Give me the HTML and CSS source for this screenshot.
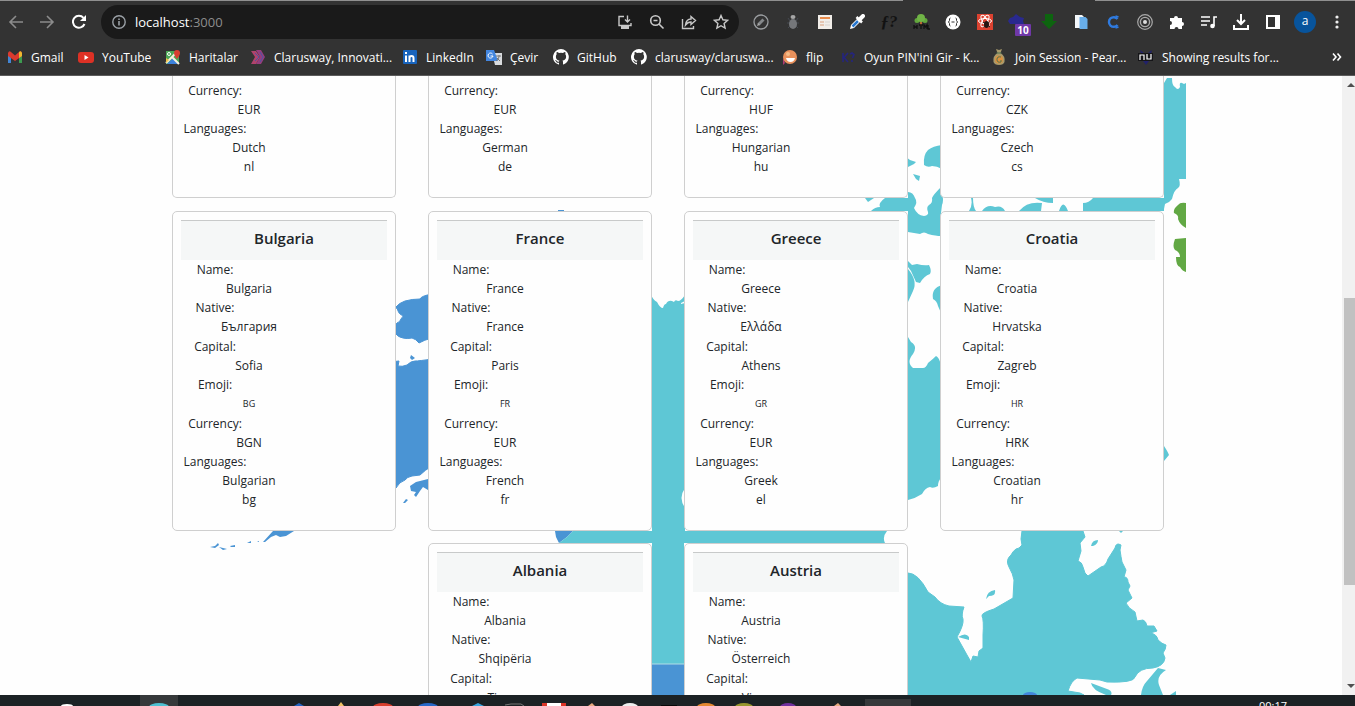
FILE: index.html
```html
<!DOCTYPE html>
<html lang="en">
<head>
<meta charset="utf-8">
<title>Countries</title>
<link rel="stylesheet" href="styles.css">
</head>
<body>
<header class="chrome">
  <div class="tab-edge"><span class="tab-active"></span></div>
  <nav class="toolbar">
    <button class="tool dim" aria-label="Back"><svg width="16" height="16" viewBox="0 0 16 16"><path d="M15 8H2M8 2L2 8l6 6" class="line"/></svg></button>
    <button class="tool dim" aria-label="Forward"><svg width="16" height="16" viewBox="0 0 16 16"><path d="M0 8h13M7 2l6 6-6 6" class="line"/></svg></button>
    <button class="tool" aria-label="Reload"><svg width="16" height="16" viewBox="0 0 16 16"><path d="M12.500 10a6 6 0 1 1-1-6.200" class="line thick"/><path d="M14 1v6H8z" fill="currentColor"/></svg></button>
    <div class="address">
      <svg width="14" height="14" viewBox="0 0 14 14"><circle cx="7" cy="7" r="6.200" fill="none" stroke="#9aa0a6" stroke-width="1.400"/><path d="M7 6v4.500M7 3.500V5" stroke="#9aa0a6" stroke-width="1.600"/></svg>
      <span class="url">localhost<span class="port">:3000</span></span>
      <button class="tool soft" aria-label="Install"><svg width="16" height="16" viewBox="0 0 16 16"><path d="M7 2.500H2v9h12V9M10.500 1.500v6M8 5.500l2.500 2.500L13 5.500" class="line fine"/><path d="M4 12h8v3H4z" fill="currentColor"/></svg></button>
      <button class="tool soft" aria-label="Zoom"><svg width="16" height="16" viewBox="0 0 16 16"><circle cx="6.500" cy="6.500" r="4.800" class="line"/><path d="M10 10l4.500 4.500M4.500 6.500h4" class="line"/></svg></button>
      <button class="tool soft" aria-label="Share"><svg width="16" height="16" viewBox="0 0 16 16"><path d="M1.500 5v9.500h11V12" class="line fine"/><path d="M4.500 11c.5-4 2-6 5.500-6V2.500L14.500 6.500 10 10.500V8C7.500 8 6 9 4.500 11z" class="line fine"/></svg></button>
      <button class="tool soft" aria-label="Bookmark"><svg width="16" height="16" viewBox="0 0 16 16"><path d="M8 1.500l1.900 4.300 4.700.5-3.500 3.100 1 4.700L8 11.700l-4.100 2.400 1-4.700L1.400 6.300l4.700-.5z" class="line fine"/></svg></button>
    </div>
    <button class="tool" aria-label="Compass"><svg width="16" height="16" viewBox="0 0 16 16"><circle cx="8" cy="8" r="7" fill="none" stroke="#9a9da0" stroke-width="1.300"/><path d="M5.500 10.500l5-5" stroke="#85888b" stroke-width="3"/><path d="M4 12l1-3 2 2z" fill="#aaa"/></svg></button>
    <button class="tool" aria-label="Bug"><svg width="16" height="16" viewBox="0 0 16 16"><path d="M3 4l2 3M13 4l-2 3M2 9h12M3 14l3-3M13 14l-3-3" stroke="#444850" /><ellipse cx="8" cy="10" rx="4" ry="5" fill="#75777a"/><ellipse cx="8" cy="3" rx="2.500" ry="2" fill="#a6a6a6"/></svg></button>
    <button class="tool" aria-label="Notes"><svg width="16" height="16" viewBox="0 0 16 16"><path d="M1 1h14v14H1z" fill="#f2eee9"/><path d="M3 3h10v2H3z" fill="#e88b4b"/><path d="M3 8h4M3 11h4" stroke="#dba07c"/><path d="M8 8h5M8 11h5" stroke="#d8d4d0"/></svg></button>
    <button class="tool" aria-label="Colour picker"><svg width="16" height="16" viewBox="0 0 16 16"><path d="M1 15l1-4 7-7 3 3-7 7z" fill="#fff"/><path d="M3.500 12.500L9 7" stroke="#2878d0" stroke-width="2.500"/><path d="M7.500 3l5.500 5.500" stroke="#fff" stroke-width="2.500"/><path d="M10.500 5.500L14 2" stroke="#fff" stroke-width="4" stroke-linecap="round"/></svg></button>
    <button class="tool script-tool" aria-label="Font finder">ƒ?</button>
    <button class="tool" aria-label="HTML tree"><svg width="18" height="16" viewBox="0 0 18 16"><path d="M8 7h2v5H8z" fill="#b56a32"/><circle cx="5" cy="6.500" r="2.500" fill="#61a63c"/><circle cx="13" cy="6.500" r="2.500" fill="#61a63c"/><circle cx="9" cy="4" r="4" fill="#70b446"/><path d="M2 11v4M5 11v4M2 13h3M7 11h4M9 11v4M12 15v-4l1.500 2L15 11v4M16 11v4h2" fill="none" stroke="#111" stroke-width="1.300"/></svg></button>
    <button class="tool" aria-label="JSON"><svg width="16" height="16" viewBox="0 0 16 16"><circle cx="8" cy="8" r="7.500" fill="#fff"/><path d="M5.500 4Q4 4 4.500 6.500L3.500 8l1 1.500Q4 12 5.500 12M10.500 4q1.500 0 1 2.500l1 1.500-1 1.500q.5 2.500-1 2.500M6.500 8h3" fill="none" stroke="#333"/></svg></button>
    <button class="tool" aria-label="React tools"><svg width="16" height="16" viewBox="0 0 16 16"><path d="M0 0h16v16H0z" fill="#dc4230"/><g fill="none" stroke="#fff"><ellipse cx="8" cy="7" rx="6.500" ry="2.500"/><ellipse cx="8" cy="7" rx="6.500" ry="2.500" transform="rotate(60 8 7)"/><ellipse cx="8" cy="7" rx="6.500" ry="2.500" transform="rotate(-60 8 7)"/></g><ellipse cx="9.500" cy="10.500" rx="2.500" ry="3.500" fill="#25140f"/><path d="M6 8l7 5M12.500 8l-6 5" stroke="#25140f"/></svg></button>
    <button class="tool" aria-label="Downloads counter"><svg width="28" height="22" viewBox="0 0 28 22"><path d="M13 3l4 3 4 1-1 3 1 3H7L5 10l2-3 3-1z" fill="#29298f"/></svg><span class="badge">10</span></button>
    <button class="tool" aria-label="Green arrow"><svg width="16" height="16" viewBox="0 0 16 16"><path d="M4 0h8v7h4l-8 8-8-8h4z" fill="#0d640f"/></svg></button>
    <button class="tool" aria-label="Copy"><svg width="16" height="16" viewBox="0 0 16 16"><path d="M2 1h7l2 2v11H2z" fill="#f4f7fa"/><path d="M6.500 3h6l2 2v10h-8z" fill="#68aeea"/></svg></button>
    <button class="tool" aria-label="C extension"><svg width="16" height="16" viewBox="0 0 16 16"><path d="M12.500 5a4.800 4.800 0 1 0 0 6" fill="none" stroke="#2f7be0" stroke-width="2.400"/><path d="M10.500 2l3 1M10.500 14l3-1" stroke="#2f7be0" stroke-width="1.600"/></svg></button>
    <button class="tool" aria-label="Target"><svg width="16" height="16" viewBox="0 0 16 16"><circle cx="8" cy="8" r="7.300" fill="none" stroke="#aaa" stroke-width="1.200"/><circle cx="8" cy="8" r="4.600" fill="none" stroke="#aaa" stroke-width="1.400"/><circle cx="8" cy="8" r="2" fill="#ddd"/></svg></button>
    <button class="tool" aria-label="Extensions"><svg width="16" height="16" viewBox="0 0 16 16"><path d="M1 4h4a2 2 0 1 1 4 0h4v4a2 2 0 1 1 0 4v3H9.500a2 2 0 1 0-4 0H1v-4a2 2 0 1 0 0-4z" fill="#fff"/></svg></button>
    <button class="tool" aria-label="Media"><svg width="16" height="16" viewBox="0 0 16 16"><path d="M0 3h9M0 7h9M0 11h6M13 12V3h3" stroke="#fff" stroke-width="1.600" fill="none"/><circle cx="11.500" cy="12" r="2.300" fill="#fff"/></svg></button>
    <button class="tool" aria-label="Downloads"><svg width="16" height="16" viewBox="0 0 16 16"><path d="M8 0v9M4 6l4 4 4-4M1 11v4h14v-4" stroke="#fff" stroke-width="2" fill="none"/></svg></button>
    <button class="tool" aria-label="Side panel"><svg width="16" height="16" viewBox="0 0 16 16"><path d="M2 2h12v12H2z" stroke="#fff" stroke-width="2" fill="none"/><path d="M10 2h4v12h-4z" fill="#fff"/></svg></button>
    <button class="tool" aria-label="Profile"><span class="avatar">a</span></button>
    <button class="tool" aria-label="Menu"><svg width="4" height="16" viewBox="0 0 4 16"><g fill="#eee"><circle cx="2" cy="3" r="1.600"/><circle cx="2" cy="8" r="1.600"/><circle cx="2" cy="13" r="1.600"/></g></svg></button>
  </nav>
  <nav class="bookmarks">
    <a href="#"><svg viewBox="0 0 16 16"><path d="M1 4v10h3V4z" fill="#4285d4"/><path d="M12 4v10h3V4z" fill="#3d9b50"/><path d="M1 4q1-3 3-1l4 3.500L12 3q2-2 3 1v3l-7 5-7-5z" fill="#dc3a2e"/><path d="M12 3q2-2 3 1v3l-3 2z" fill="#efb92f"/></svg>Gmail</a>
    <a href="#"><svg viewBox="0 0 16 16"><rect y="3" width="16" height="11" rx="3" fill="#dd3125"/><path d="M6.500 6v5l4-2.500z" fill="#fff"/></svg>YouTube</a>
    <a href="#"><svg viewBox="0 0 16 16"><path d="M1 2h13v13H1z" fill="#4ca656"/><path d="M2 15l6-6 6 6z" fill="#3c82dc"/><path d="M1 14L12 3M7.500 8.500L14 15" stroke="#f5efe0" stroke-width="2"/><path d="M1 14V9l3 2z" fill="#eec24a"/><path d="M9 4a3 3 0 0 1 6 0q0 2-3 6Q9 6 9 4z" fill="#d83e31"/><circle cx="4" cy="5" r="1.500" fill="none" stroke="#fff"/></svg>Haritalar</a>
    <a href="#"><svg viewBox="0 0 16 16"><path d="M1 2h5l4 6-4 7H1l4-7z" fill="#af436d"/><path d="M6 1h5l4 7-4 7H6l4-7z" fill="#963d7d"/><path d="M5 4l4 4-4 4M10 3l3 5-3 5" stroke="#4a55a3" fill="none"/></svg>Clarusway, Innovati...</a>
    <a href="#"><svg viewBox="0 0 16 16"><rect x="1" y="1" width="14" height="14" rx="1" fill="#1864bd"/><path d="M4 6.500V13M4 3v2M7.500 6.500V13M7.500 9q0-2 2-2t2 2v4" stroke="#fff" stroke-width="2" fill="none"/></svg>LinkedIn</a>
    <a href="#"><svg viewBox="0 0 16 16"><path d="M6 4h10v12H9z" fill="#d9dbde"/><path d="M0 1h8l4 11H0z" fill="#4386df"/><path d="M6.500 5A2.500 2.500 0 1 0 7 7H4.500" stroke="#fff" fill="none"/><path d="M10 7h5M13 6v2q-1 3-3 4M11 9l3 3" stroke="#777" fill="none"/></svg>Çevir</a>
    <a href="#"><svg viewBox="0 0 16 16"><path d="M8 0a8 8 0 0 0-2.500 15.600c.4.100.5-.2.500-.4v-1.500c-2.200.5-2.700-1-2.700-1-.4-.9-.9-1.200-.9-1.200-.7-.5.1-.5.1-.5.800.1 1.200.8 1.200.8.700 1.300 1.900.9 2.300.7.100-.5.300-.9.500-1.100-1.800-.2-3.600-.9-3.600-4 0-.9.300-1.600.8-2.200-.1-.2-.4-1 .1-2.100 0 0 .7-.2 2.200.8a7.600 7.600 0 0 1 4 0c1.500-1 2.200-.8 2.200-.8.500 1.100.2 1.900.1 2.100.5.600.8 1.300.8 2.200 0 3.100-1.900 3.800-3.700 4 .3.200.6.700.6 1.500v2.200c0 .2.100.5.600.4A8 8 0 0 0 8 0z" fill="#fff"/></svg>GitHub</a>
    <a href="#"><svg viewBox="0 0 16 16"><path d="M8 0a8 8 0 0 0-2.500 15.600c.4.100.5-.2.500-.4v-1.500c-2.200.5-2.700-1-2.700-1-.4-.9-.9-1.200-.9-1.200-.7-.5.1-.5.1-.5.800.1 1.200.8 1.200.8.700 1.300 1.900.9 2.300.7.100-.5.300-.9.500-1.100-1.800-.2-3.600-.9-3.600-4 0-.9.300-1.600.8-2.200-.1-.2-.4-1 .1-2.100 0 0 .7-.2 2.200.8a7.600 7.600 0 0 1 4 0c1.500-1 2.200-.8 2.200-.8.500 1.100.2 1.900.1 2.100.5.600.8 1.300.8 2.200 0 3.100-1.900 3.800-3.700 4 .3.200.6.700.6 1.500v2.200c0 .2.100.5.600.4A8 8 0 0 0 8 0z" fill="#fff"/></svg>clarusway/claruswa...</a>
    <a href="#"><svg viewBox="0 0 16 16"><path d="M1 9l2 5-2 2z" fill="#b13c73"/><circle cx="8" cy="8" r="7" fill="#e9915c"/><path d="M4 9h9q-1 4-4.500 4T4 9z" fill="#fff"/><circle cx="6" cy="5" r="2" fill="#f5bd88"/></svg>flip</a>
    <a href="#"><svg viewBox="0 0 16 16"><path d="M3 4v9M8 4L4 8.500 8 13M10 5l2-1 2 1.500L12.500 9M12 11v2" stroke="#25257d" stroke-width="1.600" fill="none"/></svg>Oyun PIN'ini Gir - K...</a>
    <a href="#"><svg viewBox="0 0 16 16"><path d="M5 0l3 1 3-1-1.500 4q5 3 4 9-1 3-5.500 3t-5.500-3q-1-6 4-9z" fill="#a89a6c"/><circle cx="8" cy="10.500" r="4" fill="#d9903f"/><path d="M5.500 4h5M10 8q-4-1-4 2.500T10 13V11" stroke="#4e7350" fill="none"/></svg>Join Session - Pear...</a>
    <a href="#"><svg viewBox="0 0 16 16"><path d="M2 1l4 3h4l4-3-3 11-3 4-3-4z" fill="#22226a"/><path d="M0 4h15v8H0z" fill="#151518"/><path d="M2 11V6h4v5M9 5v5h4V5" stroke="#fff" stroke-width="1.200" fill="none"/></svg>Showing results for...</a>
    <button class="more" aria-label="More bookmarks"><svg width="10" height="10" viewBox="0 0 10 10"><path d="M1 1.500L4 5 1 8.500M5.500 1.500L8.500 5l-3 3.500" class="line"/></svg></button>
  </nav>
</header>

<div class="viewport">
  <main class="page">
    <section class="countries">
      <svg class="map" viewBox="172 76 1014 619" aria-hidden="true">
        <g fill="#4a94d4" stroke="#4a94d4" stroke-linejoin="round">
          <path d="M390 330V310L396 307Q399 303 405 301 412 299 420 299 421 296 432 294V338Q424 340 419 343 416 339 412 338 407 339 403 338 398 337 396 334 395 324 397 323 400 322 401 319 404 316 402 315 399 315 397 308L390 310z"/>
          <path d="M390 362L399 361 398 366Q402 367 407 365 411 361 415 361T432 359V466Q425 470 420 475L412 476Q407 477 405 480 399 482 396 488L390 491z"/>
          <path d="M410 358l1-3 4 3-3 2z M410 486l6-4 12-3v11l-5-3-3 4-4 6-2-2 2-3-5-1z M403 503l3-4 2 1-3 3z" stroke="none"/>
          <path d="M210 547l5-1 3-3 1 2-4 3z M219 547l8 2-4 1z M230 546l5-1v2h-4z M247 543l4-2v2z M257 541h2v1z M263 542l10-11h21l-8 5-6 1-4-2-5 2-6 5z" stroke="none"/>
          <path d="M558 210h6v2h-6z M555 531h18l-6 6-8 6-3-6z M652 664h32v31h-32z" stroke="none"/>
        </g>
        <g fill="#5ec7d5" stroke="#5ec7d5" stroke-linejoin="round">
          <path d="M650 293Q653 300 657 302 660 308 663 308 664 304 666 304 668 300 672 301L674 302Q675 299 678 301 681 301 685 295V301L681 303v1l4-1V488Q678 498 685 508V531H887Q882 537 885 543H684V664H652V543H559L567 537 573 531H652z" stroke="none"/>
          <path d="M942 145Q933 146 928 150 923 155 924 165 928 168 932 166 937 166 942 169z M906 157l4 3 6 2-2 2-8 4z M913 174l7 2-1 5-3-2z M865 198h9l-6 4z" stroke="none"/>
          <path d="M885 198H908V192Q913 192 915 198 918 202 914 208 917 215 924 216 929 215 928 212 926 207 929 205 933 203 932 198 933 195 942 186V195Q944 200 942 205L941 213V236Q936 236 928 234 924 231 920 234L908 232V211H871Q875 207 880 207 878 203 885 198z" stroke="none"/>
          <path d="M969 211q4-6 2-13h2q0 9 3 13z M982 211q5-7 13-4 7-2 10 4z M1019 211q8-10 23-8l-1 8z M1035 198h18v5q-10 0-18-5z M1059 211q4-13 9 0z M1083 211v-8q6 0 10-5h71v13z" stroke="none"/>
          <path d="M1164 83L1167 78H1172Q1172 86 1175 87 1178 91 1180 87 1179 82 1182 83L1184 84 1186 83V179H1179Q1181 186 1178 188 1174 190 1172 199 1169 203 1165 204L1164 209 1157 211V198H1164z" stroke="none"/>
          <path d="M908 261l4 4 5-1q7 2 12 1 3 6 1 9-6 2-10 9l-4-1-5-11-3-4z M908 269q10 12 5 22l-5 11z M942 285q-11 3-9 14 4 2 5 7l4 9z" stroke="none"/>
          <path d="M908 337L911 342Q918 346 913 354 906 362 913 368H923Q926 368 928 363 933 359 936 356 939 357 941 365V478Q938 481 938 486 933 489 930 487 925 488 922 494 916 498 908 500z M1164 446q4 6 5 9l-5 6z" stroke="none"/>
          <path d="M908 573Q918 573 928 592L935 597Q940 604 949 606L964 607Q961 615 963 619 964 625 957 637L967 655 971 662 973 656 978 657 979 651 983 648V635Q984 620 982 616 981 613 994 609L1013 598 1014 580Q1013 574 1009 567 1005 560 1011 555 1013 551 1016 549 1019 549 1022 545 1020 540 1022 531H1083L1085 537 1080 543 1081 551 1078 561Q1082 562 1083 567L1085 573 1088 576 1101 567Q1106 566 1108 559L1115 548Q1116 542 1121 545L1120 550Q1121 557 1122 562L1126 570 1124 577Q1128 577 1128 582L1130 586 1128 590 1132 598 1126 603Q1128 608 1135 612L1137 621 1143 620Q1146 621 1147 626L1154 626 1157 631 1150 633Q1157 634 1158 640 1162 644 1166 645 1166 649 1163 653L1165 658Q1164 666 1153 668 1139 668 1135 677 1134 683 1107 682L1100 680 1077 678Q1071 681 1068 691L1080 693 1084 695H908z"/>
          <path d="M986 599q1-8 9-9 1 6-6 6z M958 637q8-5 11 0v3z M1091 546q1-6 7-6 0 4-5 6z M1091 683l16 6q6 2 4 6h-5q-14-5-15-12z M1119 531h4l-2 2z M1158 668l8 2q-10 6-7 15l4 10h-22q1-9 6-14z M1170 695l6-4v4z" stroke="none"/>
        </g>
        <ellipse cx="1030" cy="695" rx="7" ry="3" fill="#4386dc"/>
        <path d="M652 664h32" stroke="#b1dce6"/>
        <path d="M1186 203Q1180 202 1178 205 1173 209 1174 213 1179 215 1178 219 1180 225 1186 228z M1186 238L1175 239Q1172 247 1175 250 1180 252 1180 257H1176Q1176 266 1180 267 1182 271 1186 272z" fill="#62a844"/>
      </svg>
      <article class="card card-tail"><dl><dt>Currency:</dt><dd>EUR</dd><dt>Languages:</dt><dd>Dutch</dd><dd>nl</dd></dl></article>
      <article class="card card-tail"><dl><dt>Currency:</dt><dd>EUR</dd><dt>Languages:</dt><dd>German</dd><dd>de</dd></dl></article>
      <article class="card card-tail"><dl><dt>Currency:</dt><dd>HUF</dd><dt>Languages:</dt><dd>Hungarian</dd><dd>hu</dd></dl></article>
      <article class="card card-tail"><dl><dt>Currency:</dt><dd>CZK</dd><dt>Languages:</dt><dd>Czech</dd><dd>cs</dd></dl></article>

      <article class="card"><h2>Bulgaria</h2><dl><dt>Name:</dt><dd>Bulgaria</dd><dt>Native:</dt><dd class="native">България</dd><dt>Capital:</dt><dd>Sofia</dd><dt>Emoji:</dt><dd class="emoji">BG</dd><dt>Currency:</dt><dd>BGN</dd><dt>Languages:</dt><dd>Bulgarian</dd><dd>bg</dd></dl></article>
      <article class="card"><h2>France</h2><dl><dt>Name:</dt><dd>France</dd><dt>Native:</dt><dd class="native">France</dd><dt>Capital:</dt><dd>Paris</dd><dt>Emoji:</dt><dd class="emoji">FR</dd><dt>Currency:</dt><dd>EUR</dd><dt>Languages:</dt><dd>French</dd><dd>fr</dd></dl></article>
      <article class="card"><h2>Greece</h2><dl><dt>Name:</dt><dd>Greece</dd><dt>Native:</dt><dd class="native">Ελλάδα</dd><dt>Capital:</dt><dd>Athens</dd><dt>Emoji:</dt><dd class="emoji">GR</dd><dt>Currency:</dt><dd>EUR</dd><dt>Languages:</dt><dd>Greek</dd><dd>el</dd></dl></article>
      <article class="card"><h2>Croatia</h2><dl><dt>Name:</dt><dd>Croatia</dd><dt>Native:</dt><dd class="native">Hrvatska</dd><dt>Capital:</dt><dd>Zagreb</dd><dt>Emoji:</dt><dd class="emoji">HR</dd><dt>Currency:</dt><dd>HRK</dd><dt>Languages:</dt><dd>Croatian</dd><dd>hr</dd></dl></article>

      <article class="card"><h2>Albania</h2><dl><dt>Name:</dt><dd>Albania</dd><dt>Native:</dt><dd class="native">Shqipëria</dd><dt>Capital:</dt><dd>Tirana</dd></dl></article>
      <article class="card"><h2>Austria</h2><dl><dt>Name:</dt><dd>Austria</dd><dt>Native:</dt><dd class="native">Österreich</dd><dt>Capital:</dt><dd>Vienna</dd></dl></article>
    </section>
  </main>
  <div class="scrollbar" aria-hidden="true">
    <span class="arrow up"></span>
    <span class="space-above"></span><span class="thumb"></span><span class="space-below"></span>
    <span class="arrow down"></span>
  </div>
</div>

<footer class="taskbar">
  <svg class="apps" width="920" height="11" viewBox="0 0 920 11" aria-hidden="true">
    <path d="M140 0h38v11h-38zM865 4h46v7h-46z" fill="#36393b"/>
    <ellipse cx="67" cy="11" rx="6" ry="2" fill="#fff"/>
    <ellipse cx="159" cy="12" rx="10" ry="4" fill="#4ec0d2"/>
    <path d="M294 11l5-3 5 3z" fill="#2464c2"/>
    <path d="M338 11l3-4 3 4z" fill="#f0c265"/>
    <ellipse cx="383" cy="12" rx="10" ry="4" fill="#d83e2d"/>
    <ellipse cx="428" cy="12" rx="10" ry="4" fill="#2868c8"/>
    <path d="M472 11l6-3 6 3z" fill="#39a4df"/>
    <path d="M505 10l6-1h10l3 2" stroke="#777" fill="none"/>
    <path d="M542 8h24v3h-24z" fill="#dc3528"/><path d="M547 8h14v3h-14z" fill="#fff"/>
    <path d="M588 11l4-3 3 3zM834 11l4-3 3 3z" fill="#e8aa80"/>
    <ellipse cx="630" cy="12" rx="8" ry="4" fill="#eee"/>
    <path d="M661 10h16v1h-16z" fill="#080808"/>
    <ellipse cx="706" cy="12" rx="9" ry="4" fill="#e48831"/>
    <ellipse cx="744" cy="12" rx="9" ry="4" fill="#97962e"/>
    <ellipse cx="788" cy="12" rx="8" ry="4" fill="#70309e"/>
  </svg>
  <time class="clock">00:17</time>
</footer>
</body>
</html>
```
FILE: styles.css
```css
* { box-sizing: border-box; }

body {
  margin: 0;
  height: 100vh;
  display: flex;
  flex-direction: column;
  overflow: hidden;
  background: #fefefe;
  color: #212529;
  font-family: "Open Sans", "Noto Sans", sans-serif;
  font-size: 12px;
}

button {
  border: 0;
  padding: 0;
  background: none;
  color: inherit;
  font: inherit;
}

svg { display: block; flex: none; }

.chrome {
  flex: none;
  background: #333333;
  border-bottom: 1px solid #5c5c5c;
  color: #ffffff;
}

.tab-edge { height: 1px; background: #909090; display: flex; justify-content: flex-end; padding-right: 260px; }
.tab-active { width: 192px; background: #333333; }

.toolbar {
  height: 42px;
  display: flex;
  align-items: center;
  padding-right: 2px;
}

.tool {
  position: relative;
  flex: none;
  width: 32px;
  height: 32px;
  display: flex;
  align-items: center;
  justify-content: center;
}
.dim { color: #8c8c8c; }
.soft { color: #c8c8c8; }

.line { fill: none; stroke: currentColor; stroke-width: 1.6; }
.thick { stroke-width: 2; }
.fine { stroke-width: 1.4; }

.address {
  flex: 1;
  height: 34px;
  margin: 0 6px 0 5px;
  padding: 0 2px 0 11px;
  display: flex;
  align-items: center;
  border-radius: 17px;
  background: #1a1a1a;
}
.url { flex: 1; margin-left: 9px; font-size: 13px; }
.port { color: #8d8d8d; }

.script-tool {
  color: #121212;
  font: italic 700 17px "Liberation Serif", serif;
}

.badge {
  position: absolute;
  left: 14px;
  top: 18px;
  width: 16px;
  border-radius: 1px;
  background: #7038a8;
  font-size: 10px;
  line-height: 12px;
  font-weight: 700;
  text-align: center;
}

.avatar {
  width: 22px;
  height: 22px;
  border-radius: 50%;
  background: #08549c;
  line-height: 20px;
  text-align: center;
}

.bookmarks {
  height: 32px;
  padding: 0 13px 4px 7px;
  display: grid;
  grid-template-columns: 71px 87px 85px 152px 84px 67px 78px 151px 58px 151px 147px 1fr auto;
  align-items: center;
}
.bookmarks a {
  display: flex;
  align-items: center;
  gap: 8px;
  color: #ffffff;
  text-decoration: none;
  white-space: nowrap;
}
.bookmarks a svg { width: 16px; height: 16px; }

.viewport {
  flex: 1;
  min-height: 0;
  display: flex;
}

.page {
  flex: 1;
  min-width: 0;
  overflow: hidden;
  padding-right: 6px;
}

.countries {
  position: relative;
  max-width: 992px;
  margin: 0 auto;
  display: flex;
  flex-wrap: wrap;
  justify-content: center;
  align-items: flex-start;
  gap: 12px 32px;
}

.map {
  position: absolute;
  left: 0;
  top: 0;
  width: 1014px;
}

.card {
  position: relative;
  width: 224px;
  padding: 8px 8px 21px;
  border: 1px solid #cfcfcf;
  border-radius: 5px;
  background: #fefefe;
}
.card-tail {
  margin-bottom: 1px;
  padding-top: 5px;
  border-top: 0;
  border-radius: 0 0 5px 5px;
}

.card h2 {
  margin: 0;
  border-top: 1px solid #c8caca;
  background: #f5f7f7;
  font-size: 15px;
  font-weight: 600;
  line-height: 34px;
  padding-bottom: 5px;
  text-align: center;
}

.card dl { margin: 0; line-height: 19px; text-align: center; }
.card dt { width: 68px; }
.card dd { width: 136px; margin: 0; }
.card .native { line-height: 20px; }
.card .emoji { font-size: 9px; line-height: 20px; }

.scrollbar {
  flex: none;
  width: 13px;
  padding: 7px 0;
  display: flex;
  flex-direction: column;
  align-items: flex-end;
  background: #f1f1f1;
}
.thumb { width: 11px; flex: 287; background: #c1c1c1; }
.space-above { flex: 211; }
.space-below { flex: 99; }
.arrow {
  border: 4px solid transparent;
  border-top-width: 0;
  border-bottom: 4px solid #505050;
}
.arrow.down { transform: rotate(180deg); }

.taskbar {
  flex: none;
  height: 11px;
  display: flex;
  justify-content: space-between;
  overflow: hidden;
  padding-right: 68px;
  background: #1c2225;
}
.clock { padding-top: 3px; color: #ffffff; font-size: 11px; line-height: 15px; }
```
